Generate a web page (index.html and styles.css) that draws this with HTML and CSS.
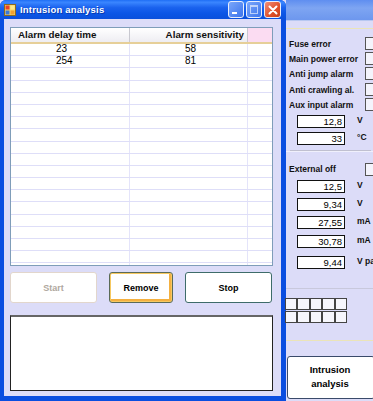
FILE: index.html
```html
<!DOCTYPE html>
<html lang="en">
<head>
  <meta charset="UTF-8" />
  <title>Intrusion analysis</title>
  <link rel="stylesheet" href="styles.css">
</head>
<body>
  <div class="desktop">
    <div class="window">
      <div class="titlebar">
        <svg class="app-icon" width="12" height="12" viewBox="0 0 12 12">
          <rect x="0.5" y="0.5" width="11" height="11" fill="#f4d36a" stroke="#8a6a20"/>
          <rect x="1.5" y="1.5" width="4" height="4" fill="#e8402a"/>
          <rect x="6.5" y="1.5" width="4" height="4" fill="#fbe98a"/>
          <rect x="1.5" y="6.5" width="4" height="4" fill="#3a78d8"/>
          <rect x="6.5" y="6.5" width="4" height="4" fill="#f0a030"/>
        </svg>
        <span class="title">Intrusion analysis</span>
        <div class="caption-btns">
          <span class="cbtn cbtn-min"><span class="dash"></span></span>
          <span class="cbtn cbtn-max"><span class="box"></span></span>
          <span class="cbtn cbtn-close">
            <svg width="10" height="10" viewBox="0 0 10 10"><path d="M1.5 1.5 L8.5 8.5 M8.5 1.5 L1.5 8.5" stroke="#fff" stroke-width="2" stroke-linecap="round"/></svg>
          </span>
        </div>
      </div>
      <div class="client">
        <div class="grid">
          <div class="grid-head">
            <div class="hcell c1">Alarm delay time</div>
            <div class="hcell c2">Alarm sensitivity</div>
            <div class="hcell c3"></div>
          </div>
          <div class="grid-body" id="grid-body"></div>
        </div>
        <div class="actions">
          <button class="btn btn-start" disabled>Start</button>
          <button class="btn btn-remove">Remove</button>
          <button class="btn btn-stop">Stop</button>
        </div>
        <div class="log"></div>
      </div>
    </div>

    <div class="backwin">
      <div class="back-title"></div>
      <div class="back-body">
        <div class="group">
          <div class="flag"><span>Fuse error</span><i class="check"></i></div>
          <div class="flag"><span>Main power error</span><i class="check"></i></div>
          <div class="flag"><span>Anti jump alarm</span><i class="check"></i></div>
          <div class="flag flag-gap"><span>Anti crawling al.</span><i class="check"></i></div>
          <div class="flag"><span>Aux input alarm</span><i class="check"></i></div>
          <div class="value"><span class="field">12,8</span><span class="unit">V</span></div>
          <div class="value"><span class="field">33</span><span class="unit">°C</span></div>
        </div>
        <div class="group group-2">
          <div class="flag"><span>External off</span><i class="check"></i></div>
          <div class="value"><span class="field">12,5</span><span class="unit">V</span></div>
          <div class="value"><span class="field">9,34</span><span class="unit">V</span></div>
          <div class="value"><span class="field">27,55</span><span class="unit">mA</span></div>
          <div class="value"><span class="field">30,78</span><span class="unit">mA</span></div>
          <div class="value"><span class="field">9,44</span><span class="unit">V pa</span></div>
        </div>
        <div class="group group-3">
          <div class="leds" id="leds"></div>
        </div>
        <div class="group-4">
          <button class="big-btn">Intrusion<br>analysis</button>
        </div>
      </div>
    </div>
  </div>

  <script>
    const rows = [['23', '58'], ['254', '81']];
    const body = document.getElementById('grid-body');
    for (let i = 0; i < 19; i++) {
      const r = rows[i] || ['', ''];
      const row = document.createElement('div');
      row.className = 'grow';
      row.innerHTML = '<div class="cell c1">' + r[0] + '</div><div class="cell c2">' + r[1] + '</div><div class="cell c3"></div>';
      body.appendChild(row);
    }
    const leds = document.getElementById('leds');
    for (let i = 0; i < 10; i++) {
      const s = document.createElement('span');
      s.className = 'led';
      leds.appendChild(s);
    }
  </script>
</body>
</html>
```

FILE: styles.css
```css
body {
  margin: 0;
  font-family: 'Liberation Sans', Arial, sans-serif;
  background-color: #dcdcf8;
  overflow: hidden;
}

.desktop {
  display: flex;
  width: 373px;
  height: 401px;
  overflow: hidden;
}

/* front window */
.window {
  width: 286px;
  flex: none;
  display: flex;
  flex-direction: column;
  background-color: #0a4ee0;
  border-radius: 6px 6px 0 0;
}

.titlebar {
  height: 22px;
  display: flex;
  align-items: center;
  padding: 0 5px 0 4px;
  border-radius: 6px 6px 0 0;
  background: linear-gradient(#1f6ef5 0%, #3a86ff 12%, #1a62ee 40%, #0c56e6 70%, #0a50dc 100%);
  color: #fff;
}

.app-icon {
  margin-right: 4px;
}

.title {
  font-size: 9.5px;
  font-weight: bold;
  letter-spacing: 0.2px;
  text-shadow: 1px 1px 0 #0a3ab0;
  flex: 1;
}

.caption-btns {
  display: flex;
  gap: 2px;
}

.cbtn {
  width: 14px;
  height: 15px;
  border: 1px solid #e8eefc;
  border-radius: 3px;
  background: linear-gradient(135deg, #7aa6fa, #3c74ec);
  position: relative;
}

.cbtn-min .dash {
  position: absolute;
  left: 3px;
  bottom: 3px;
  width: 5px;
  height: 2px;
  background-color: #fff;
}

.cbtn-max .box {
  position: absolute;
  left: 3px;
  top: 3px;
  width: 6px;
  height: 6px;
  border: 1px solid #fff;
  border-top-width: 2px;
  opacity: 0.6;
}

.cbtn-close {
  width: 15px;
  background: linear-gradient(135deg, #f0907a, #e0502a 60%, #c84018);
  display: flex;
  align-items: center;
  justify-content: center;
}

.client {
  flex: 1;
  margin: 0 5px 5px 4px;
  background-color: #dcdcf8;
  padding: 8px 8px 5px 6px;
  display: flex;
  flex-direction: column;
}

.grid {
  height: 237px;
  border: 1px solid #7f9db9;
  background-color: #fff;
  overflow: hidden;
}

.grid-head {
  display: flex;
  height: 14px;
  border-bottom: 2px solid #e6cf98;
  background: linear-gradient(#ffffff, #eeedf2);
}

.hcell {
  font-size: 9.8px;
  font-weight: bold;
  color: #111;
  line-height: 14px;
  box-sizing: border-box;
  border-right: 1px solid #c8c8d0;
}

.hcell.c1 {
  width: 119px;
  padding-left: 7px;
  flex: none;
}

.hcell.c2 {
  width: 118px;
  flex: none;
  text-align: right;
  padding-right: 3px;
}

.hcell.c3 {
  flex: 1;
  background-color: #fbdcf2;
  border-right: none;
}

.grow {
  display: flex;
  height: 12.2px;
  box-sizing: border-box;
  border-bottom: 1.5px solid #dedef8;
}

.cell {
  font-size: 10px;
  line-height: 10px;
  color: #000;
  border-right: 1px solid #e4e4fa;
  box-sizing: border-box;
}

.cell.c1 {
  width: 119px;
  padding-left: 45px;
}

.cell.c2 {
  width: 118px;
  padding-left: 55px;
}

.cell.c3 {
  flex: 1;
  border-right: none;
}

.actions {
  display: flex;
  gap: 12px;
  margin-top: 6px;
}

button {
  font-family: 'Liberation Sans', Arial, sans-serif;
  cursor: pointer;
}

.btn {
  height: 31px;
  width: 87px;
  background: #fff;
  border: 1px solid #3e6c6a;
  border-radius: 3px;
  font-size: 9px;
  font-weight: bold;
  color: #000;
  padding: 0;
}

.btn-start {
  border-color: #e2d6cc;
  color: #b0a8a0;
}

.btn-remove {
  width: 64px;
  border-color: #5a6a58;
  box-shadow: inset 0 0 0 1px #f6c860, inset -1px -1px 0 2px #f4b040;
}

.log {
  margin-top: 12px;
  height: 73px;
  background-color: #fff;
  border: 1px solid #222;
  border-top: 2px solid #666;
}

/* window behind */
.backwin {
  flex: 1;
  display: flex;
  flex-direction: column;
  background-color: #dcdcf8;
}

.back-title {
  height: 20px;
  background: linear-gradient(#5f8ef0, #7ea5f2 40%, #6d97ee);
  border-bottom: 1px solid #b8c8f0;
}

.back-body {
  flex: 1;
  display: flex;
  flex-direction: column;
}

.group {
  border-top: 1px solid #ebe4b8;
  margin-top: 7px;
  padding: 7px 0 0 3px;
}

.flag {
  display: flex;
  align-items: center;
  justify-content: space-between;
  height: 15px;
  font-size: 8.5px;
  font-weight: bold;
  color: #111;
}

.flag-gap {
  margin-top: 1px;
}

.check {
  width: 12px;
  height: 11px;
  border: 1px solid #555;
  background-color: #f4f4fc;
  margin-right: -4px;
}

.value {
  display: flex;
  align-items: flex-start;
  height: 17px;
  margin-left: 8px;
}

.group .value:nth-child(6) {
  margin-top: 3px;
}

.field {
  width: 44px;
  height: 11px;
  border: 1px solid #111;
  background-color: #fff;
  font-size: 9.5px;
  line-height: 11px;
  text-align: right;
  padding-right: 2px;
}

.unit {
  margin-left: 12px;
  font-size: 8.5px;
  font-weight: bold;
  color: #111;
  line-height: 11px;
  white-space: nowrap;
}

.group-2 {
  margin-top: 2px;
  border-top: 1px solid #f0f0fc;
  box-shadow: 0 -5px 0 -4px #c0c0d0;
  padding-top: 10px;
}

.group-2 .flag {
  height: 14px;
  margin-bottom: 4px;
}

.group-2 .value {
  height: 18.2px;
}

.group-3 {
  border-top: 1px solid #c8c8dc;
  padding: 9px 0 0 0;
  height: 42px;
  box-sizing: border-box;
  margin-top: 14px;
}

.leds {
  display: grid;
  grid-template-columns: repeat(5, 12.4px);
  grid-auto-rows: 13px;
  margin-left: -1px;
}

.led {
  border: 1px solid #444;
  background-color: #f6f6fc;
  margin: 0 0 1px 0;
}

.group-4 {
  border-top: 1px solid #ebe4b8;
  margin-top: 10px;
  padding: 15px 0 0 1px;
}

.big-btn {
  width: 88px;
  height: 43px;
  background-color: #fff;
  border: 1px solid #3a4a6a;
  border-radius: 3px;
  font-size: 9.5px;
  font-weight: bold;
  line-height: 14px;
  color: #000;
  padding: 0 2px 0 0;
}
```
